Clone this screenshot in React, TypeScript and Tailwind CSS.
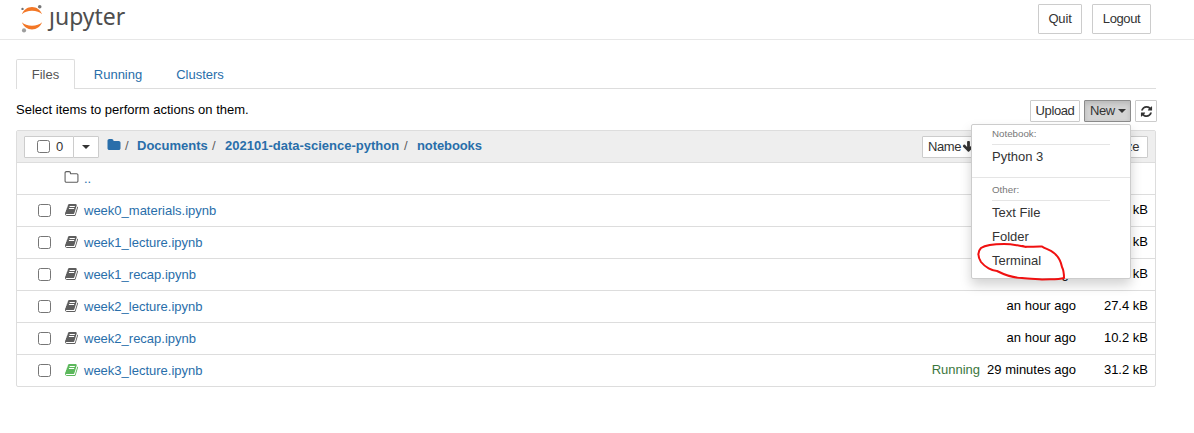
import React from "react";

const PATHS = {
  book: "M1639 478q40 57 18 129l-275 906q-19 64-76.5 107.5t-122.5 43.5h-923q-77 0-148.5-53.5t-99.5-131.5q-24-67-2-127 0-4 3-27t4-37q1-8-3-21.5t-3-19.5q2-11 8-21t16.5-23.5 16.5-23.5q23-38 45-91.5t30-91.5q3-10 .5-30t-.5-28q3-11 17-28t17-23q21-36 42-92t25-90q1-9-2.5-32t.5-28q4-13 22-30.5t22-22.5q19-26 42.5-84.5t27.5-96.5q1-8-3-25.5t-2-26.5q2-8 9-18t18-23 17-21q8-12 16.5-30.5t15-35 16-36 19.5-32 26.5-23.5 36-11.5 47.5 5.5l-1 3q38-9 51-9h761q74 0 114 56t18 130l-274 906q-36 119-71.5 153.5t-128.5 34.5h-869q-27 0-38 15-11 16-1 43 24 70 144 70h923q29 0 56-15.5t35-41.5l300-987q7-22 5-57 38 15 59 43zm-1064 2q-4 13 2 22.5t20 9.5h608q13 0 25.5-9.5t16.5-22.5l21-64q4-13-2-22.5t-20-9.5h-608q-13 0-25.5 9.5t-16.5 22.5zm-83 256q-4 13 2 22.5t20 9.5h608q13 0 25.5-9.5t16.5-22.5l21-64q4-13-2-22.5t-20-9.5h-608q-13 0-25.5 9.5t-16.5 22.5z",
  refresh: "M1639 1056q0 5-1 7-64 268-268 434.5t-478 166.5q-146 0-282.5-55t-243.5-157l-129 129q-19 19-45 19t-45-19-19-45v-448q0-26 19-45t45-19h448q26 0 45 19t19 45-19 45l-137 137q71 66 161 102t187 36q134 0 250-65t186-179q11-17 53-117 8-23 30-23h192q13 0 22.5 9.5t9.5 22.5zm25-800v448q0 26-19 45t-45 19h-448q-26 0-45-19t-19-45 19-45l138-138q-148-137-349-137-134 0-250 65t-186 179q-11 17-53 117-8 23-30 23h-199q-13 0-22.5-9.5t-9.5-22.5v-7q65-268 270-434.5t480-166.5q146 0 284 55.5t245 156.5l130-129q19-19 45-19t45 19 19 45z",
  arrow: "M1675 832q0 53-37 90l-651 652q-39 37-91 37-53 0-90-37l-651-652q-38-36-38-90 0-53 38-91l74-75q39-37 91-37 53 0 90 37l294 294v-704q0-52 38-90t90-38h128q52 0 90 38t38 90v704l294-294q37-37 90-37 52 0 91 37l75 75q37 39 37 91z",
  folder: "M1728 608v704q0 92-66 158t-158 66h-1216q-92 0-158-66t-66-158v-960q0-92 66-158t158-66h320q92 0 158 66t66 158v32h672q92 0 158 66t66 158z",
  folderOpen: "M1600 1312v-704q0-40-28-68t-68-28h-704q-40 0-68-28t-28-68v-64q0-40-28-68t-68-28h-320q-40 0-68 28t-28 68v960q0 40 28 68t68 28h1216q40 0 68-28t28-68zm128-704v704q0 92-66 158t-158 66h-1216q-92 0-158-66t-66-158v-960q0-92 66-158t158-66h320q92 0 158 66t66 158v32h672q92 0 158 66t66 158z",
};

function Icon({ name, className }: { name: keyof typeof PATHS; className: string }) {
  return (
    <svg viewBox="0 0 1792 1792" fill="currentColor" className={`shrink-0 ${className}`}>
      <path d={PATHS[name]} />
    </svg>
  );
}

function Caret() {
  return <span className="h-0 w-0 shrink-0 border-x-4 border-t-4 border-x-transparent border-t-[#333]" />;
}

function Checkbox() {
  return <span className="h-[13px] w-[13px] shrink-0 rounded-[2.5px] border border-[#767676] bg-white" />;
}

const button = "flex items-center whitespace-nowrap border border-[#ccc] bg-white text-[#333] rounded-[1px]";

const files = [
  { name: "week0_materials.ipynb", modified: "an hour ago", size: "18.1 kB" },
  { name: "week1_lecture.ipynb", modified: "an hour ago", size: "22.6 kB" },
  { name: "week1_recap.ipynb", modified: "an hour ago", size: "12.3 kB" },
  { name: "week2_lecture.ipynb", modified: "an hour ago", size: "27.4 kB" },
  { name: "week2_recap.ipynb", modified: "an hour ago", size: "10.2 kB" },
  { name: "week3_lecture.ipynb", modified: "29 minutes ago", size: "31.2 kB", running: true },
];

function Logo() {
  return (
    <div className="flex">
      <svg viewBox="0 0 26 34" className="h-[34px] w-[26px]">
        <path d="M1.9 14.2C3.6 9.8 7.5 7 12 7s8.4 2.800 10.1 7.2C19.900 11.9 16.2 10.7 12 10.700s-7.9 1.2-10.1 3.5z" fill="#f37726" />
        <path d="M1.9 22.2C3.6 26.6 7.5 29.400 12 29.400s8.400-2.800 10.100-7.200C19.900 24.500 16.200 25.700 12 25.700s-7.900-1.200-10.100-3.500z" fill="#f37726" />
        <circle cx="2.5" cy="8.9" r="1.2" fill="#717171" />
        <circle cx="19.7" cy="6.7" r="1.8" fill="#767677" />
        <circle cx="4" cy="30.4" r="2.1" fill="#9e9e9e" />
      </svg>
      <span className="ml-[3px] font-['Noto_Sans',sans-serif] text-[23px] leading-[32px] text-[#4e4e4e]">ȷupyter</span>
    </div>
  );
}

function NewMenu() {
  const item = "h-6 pl-5 leading-6 text-[#333]";
  return (
    <div className="absolute right-0 top-[24px] z-10 h-[155px] w-[160px] rounded-[2px] border border-[#ccc] bg-white shadow-[0_6px_12px_rgba(0,0,0,0.175)]">
      <div className="mx-5 h-5 border-b border-[#e5e5e5] text-[9.75px] leading-[17px] text-[#777]">Notebook:</div>
      <div className={item}>Python 3</div>
      <div className="mt-2 h-px bg-[#e5e5e5]" />
      <div className="mx-5 mt-[3px] h-[20px] border-b border-[#e5e5e5] text-[9.75px] leading-[18px] text-[#777]">Other:</div>
      <div className={item}>Text File</div>
      <div className={item}>Folder</div>
      <div className={item}>Terminal</div>
      <svg viewBox="0 0 90 42" className="absolute left-[4px] top-[115px] h-[42px] w-[90px]" fill="none" stroke="#f01010" strokeWidth="2" strokeLinecap="round" strokeLinejoin="round">
        <path d="M47 6C50 8 59 6 66 6.500C69 9 74 9 78 13C83 17 85 22 86 27C88 31 88 35 88 38C82 40 74 39 66 39.500C60 39 53 39 46 38C38 38 29 35 21 31C16 31 9 27 5 22C2 17 1 12 5 8C11 4 20 4 28 4C37 4 45 6 50 7" />
      </svg>
    </div>
  );
}

export default function App() {
  return (
    <div className="h-[433px] overflow-hidden bg-white font-['Liberation_Sans',Arial,sans-serif] text-[13px] leading-5 text-black">
      <header className="flex h-10 justify-between border-b border-[#e7e7e7] pl-5 pr-[43px]">
        <Logo />
        <div className="flex gap-[10px] pt-1">
          <button className={`${button} h-[30px] w-[44px] justify-center tracking-[-0.15px]`}>Quit</button>
          <button className={`${button} h-[30px] w-[59px] justify-center tracking-[-0.4px]`}>Logout</button>
        </div>
      </header>

      <main className="ml-4 w-[1140px] pt-[19px]">
        <nav className="flex h-[30px] border-b border-[#ddd] text-[#296eaa]">
          <span className="h-[30px] w-[59px] rounded-t-[2px] border border-b-0 border-[#ddd] bg-white text-center leading-[29px] text-[#555]">Files</span>
          <span className="ml-[2px] w-[82px] text-center leading-[31px]">Running</span>
          <span className="ml-px w-[80px] text-center leading-[31px]">Clusters</span>
        </nav>

        <div className="-mr-px flex justify-between pt-[11px]">
          <span className="leading-[19px]">Select items to perform actions on them.</span>
          <div className="flex h-[22px] gap-1">
            <button className={`${button} w-[50px] justify-center tracking-[-0.4px]`}>Upload</button>
            <div className="relative">
              <button className="flex h-[22px] w-[47px] items-center gap-[3px] rounded-[1px] border border-[#8c8c8c] bg-[#d4d4d4] pl-[5px] tracking-[-0.4px] text-[#333] shadow-[inset_0_3px_5px_rgba(0,0,0,0.125)]">
                New <Caret />
              </button>
              <NewMenu />
            </div>
            <button className={`${button} w-[22px] justify-center`}>
              <Icon name="refresh" className="h-[13px] w-[13px]" />
            </button>
          </div>
        </div>

        <section className="mt-2 rounded-[2px] border border-[#ddd]">
          <div className="flex h-[31px] items-center bg-[#eee] pl-[7px] pr-[7px]">
            <div className="flex h-[22px]">
              <div className={`${button} w-[50px] gap-[6px] pl-3`}><Checkbox />0</div>
              <div className={`${button} -ml-px w-[26px] justify-center`}><Caret /></div>
            </div>
            <div className="ml-[8px] flex items-center pb-[2px] font-bold text-[#296eaa]">
              <Icon name="folder" className="h-[14px] w-[14px] -translate-y-px" />
              <span className="ml-1 w-3 font-normal text-[#5e5e5e]">/</span>
              <span className="w-[75px]">Documents</span>
              <span className="w-[13px] font-normal text-[#5e5e5e]">/</span>
              <span className="w-[179px]">202101-data-science-python</span>
              <span className="w-[13px] font-normal text-[#5e5e5e]">/</span>
              <span className="tracking-[-0.1px]">notebooks</span>
            </div>
            <div className="ml-auto flex h-[22px]">
              <div className={`${button} w-[59px] pl-[5px] tracking-[-0.4px]`}>Name <Icon name="arrow" className="ml-px h-[13px] w-[13px]" /></div>
              <div className={`${button} ml-[10px] w-[90px] justify-center`}>Last Modified</div>
              <div className={`${button} ml-1 w-[63px] justify-end pr-[8px] tracking-[-0.4px]`}>File size</div>
            </div>
          </div>
          <div className="flex h-8 items-center border-t border-[#ddd] pl-[47px] text-[#5e5e5e]">
            <Icon name="folderOpen" className="h-[15px] w-[15px] -translate-y-px" />
            <span className="ml-[5px] text-[#296eaa]">..</span>
          </div>
          {files.map((file) => (
            <div key={file.name} className="flex h-8 items-center border-t border-[#ddd] pl-[21px] pr-[7px]">
              <Checkbox />
              <Icon name="book" className={`ml-[14px] h-[14px] w-[14px] -translate-y-px ${file.running ? "text-[#5cb85c]" : "text-[#5e5e5e]"}`} />
              <span className="ml-[5px] text-[#296eaa]">{file.name}</span>
              <span className="ml-auto flex pb-[2px]">
                {file.running && <span className="mr-[7px] text-[#3c763d]">Running</span>}
                <span>{file.modified}</span>
                <span className="w-[72px] text-right">{file.size}</span>
              </span>
            </div>
          ))}
        </section>
      </main>
    </div>
  );
}
